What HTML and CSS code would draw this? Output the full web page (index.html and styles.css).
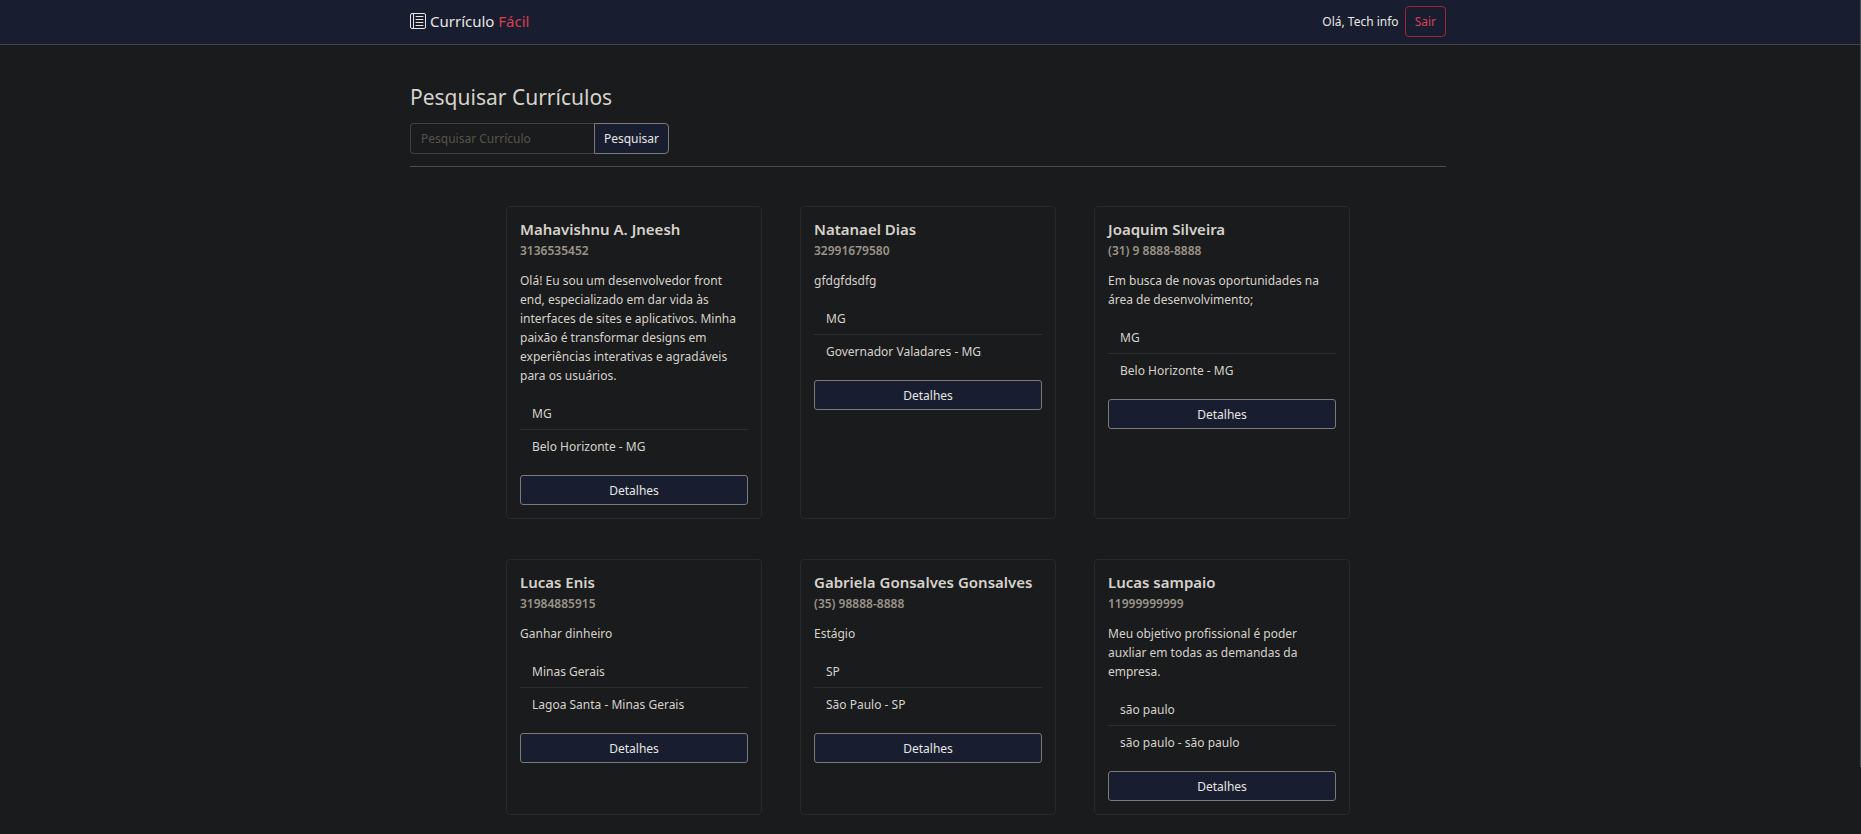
FILE: index.html
```html
<!DOCTYPE html>
<html lang="pt-BR">
<head>
<meta charset="utf-8">
<meta name="viewport" content="width=device-width, initial-scale=1">
<title>Currículo Fácil</title>
<link rel="stylesheet" href="styles.css">
</head>
<body>
<header class="topbar">
  <nav class="container topbar-inner">
    <a class="brand" href="#">
      <svg class="brand-icon" viewBox="0 0 16 16" fill="none" stroke="currentColor" stroke-linecap="round" aria-hidden="true"><rect x=".5" y=".5" width="15" height="15" rx="1.5"/><path d="M3.500 .5v15M6 3.500h7M6 6.500h7M6 9.500h7M6 12.500h7"/></svg>
      <span>Currículo <span class="brand-accent">Fácil</span></span>
    </a>
    <div class="session">
      <span>Olá, Tech info</span>
      <button class="logout" type="button">Sair</button>
    </div>
  </nav>
</header>
<main class="container">
  <h1 class="page-title">Pesquisar Currículos</h1>
  <form class="search" role="search">
    <input class="search-input" type="text" placeholder="Pesquisar Currículo" aria-label="Pesquisar Currículo">
    <button class="btn search-btn" type="button">Pesquisar</button>
  </form>
  <hr class="divider">
  <section class="cards">
    <article class="card">
      <h2 class="card-title">Mahavishnu A. Jneesh</h2>
      <p class="card-phone">3136535452</p>
      <p class="card-text">Olá! Eu sou um desenvolvedor front end, especializado em dar vida às interfaces de sites e aplicativos. Minha paixão é transformar designs em experiências interativas e agradáveis para os usuários.</p>
      <ul class="card-list"><li>MG</li><li>Belo Horizonte - MG</li></ul>
      <a class="btn" href="#">Detalhes</a>
    </article>
    <article class="card">
      <h2 class="card-title">Natanael Dias</h2>
      <p class="card-phone">32991679580</p>
      <p class="card-text">gfdgfdsdfg</p>
      <ul class="card-list"><li>MG</li><li>Governador Valadares - MG</li></ul>
      <a class="btn" href="#">Detalhes</a>
    </article>
    <article class="card">
      <h2 class="card-title">Joaquim Silveira</h2>
      <p class="card-phone">(31) 9 8888-8888</p>
      <p class="card-text">Em busca de novas oportunidades na área de desenvolvimento;</p>
      <ul class="card-list"><li>MG</li><li>Belo Horizonte - MG</li></ul>
      <a class="btn" href="#">Detalhes</a>
    </article>
    <article class="card">
      <h2 class="card-title">Lucas Enis</h2>
      <p class="card-phone">31984885915</p>
      <p class="card-text">Ganhar dinheiro</p>
      <ul class="card-list"><li>Minas Gerais</li><li>Lagoa Santa - Minas Gerais</li></ul>
      <a class="btn" href="#">Detalhes</a>
    </article>
    <article class="card">
      <h2 class="card-title">Gabriela Gonsalves Gonsalves</h2>
      <p class="card-phone">(35) 98888-8888</p>
      <p class="card-text">Estágio</p>
      <ul class="card-list"><li>SP</li><li>São Paulo - SP</li></ul>
      <a class="btn" href="#">Detalhes</a>
    </article>
    <article class="card">
      <h2 class="card-title">Lucas sampaio</h2>
      <p class="card-phone">11999999999</p>
      <p class="card-text">Meu objetivo profissional é poder auxliar em todas as demandas da empresa.</p>
      <ul class="card-list"><li>são paulo</li><li>são paulo - são paulo</li></ul>
      <a class="btn" href="#">Detalhes</a>
    </article>
  </section>
</main>
<div class="scroll-edge" aria-hidden="true"></div>
</body>
</html>
```
FILE: styles.css
```css
* { box-sizing: border-box; }

body {
  margin: 0;
  background: #1a1b1c;
  color: #d6d2cc;
  font: 12px/19px "Segoe UI", "Noto Sans", sans-serif;
}

h1, h2, p, ul { margin: 0; padding: 0; }
a { color: inherit; text-decoration: none; }
button, input { font: inherit; }

.topbar {
  padding-right: 5px;
  background: #181e2f;
  border-bottom: 1px solid #3f4347;
}

.container {
  width: 100%;
  max-width: 1056px;
  margin: 0 auto;
  padding: 0 10px;
}

.topbar-inner {
  display: flex;
  align-items: center;
  justify-content: space-between;
  min-height: 44px;
  padding-bottom: 2px;
}

.brand {
  display: flex;
  align-items: center;
  gap: 4px;
  color: #e8e6e3;
  font-size: 15px;
}

.brand-icon { width: 16px; height: 16px; }
.brand-accent { color: #dc3f4f; }

.session {
  display: flex;
  align-items: center;
  gap: 6px;
  color: #e8e6e3;
}

.logout {
  height: 31px;
  padding: 0 9px;
  color: #dc3f5a;
  background: transparent;
  border: 1px solid #a12436;
  border-radius: 4px;
}

main { padding-bottom: 18px; }
body > main.container { max-width: 1061px; padding-right: 15px; }

.page-title {
  padding-top: 39px;
  color: #d6d2cc;
  font-size: 21px;
  font-weight: 400;
  line-height: 27px;
}

.search {
  display: flex;
  width: 259px;
  margin-top: 12px;
}

.search-input {
  flex: 1;
  min-width: 0;
  height: 31px;
  padding: 0 10px;
  color: #d6d2cc;
  background: #1a1b1c;
  border: 1px solid #3c4043;
  border-right: 0;
  border-radius: 4px 0 0 4px;
}

.search-input::placeholder { color: #57534c; opacity: 1; }

.btn {
  display: flex;
  align-items: center;
  justify-content: center;
  height: 30px;
  color: #e8e6e3;
  background: #181e2f;
  border: 1px solid #7d7974;
  border-radius: 3px;
}

.search-btn {
  height: 31px;
  padding: 0 9px;
  border-radius: 0 4px 4px 0;
}

.divider {
  height: 1px;
  margin: 12px 0 39px;
  background: #4b4b4a;
  border: 0;
}

.cards {
  display: grid;
  grid-template-columns: repeat(auto-fit, 256px);
  gap: 40px 38px;
  justify-content: center;
  padding: 0 90px;
}

.card {
  padding: 13px;
  border: 1px solid #28292b;
  border-radius: 4px;
}

.card-title {
  font-size: 15px;
  font-weight: 600;
  line-height: 19px;
}

.card-phone {
  margin-top: 4px;
  color: #9a948a;
  font-weight: 600;
  line-height: 15px;
}

.card-text { margin: 13px 0; }

.card-list {
  margin-bottom: 13px;
  list-style: none;
}

.card-list li { padding: 6px 12px; }
.card-list li + li { border-top: 1px solid #2c2d2f; padding-top: 7px; }

.scroll-edge {
  position: fixed;
  top: 0;
  right: 0;
  width: 1px;
  height: 92vh;
  background: #4d5053;
}
```
